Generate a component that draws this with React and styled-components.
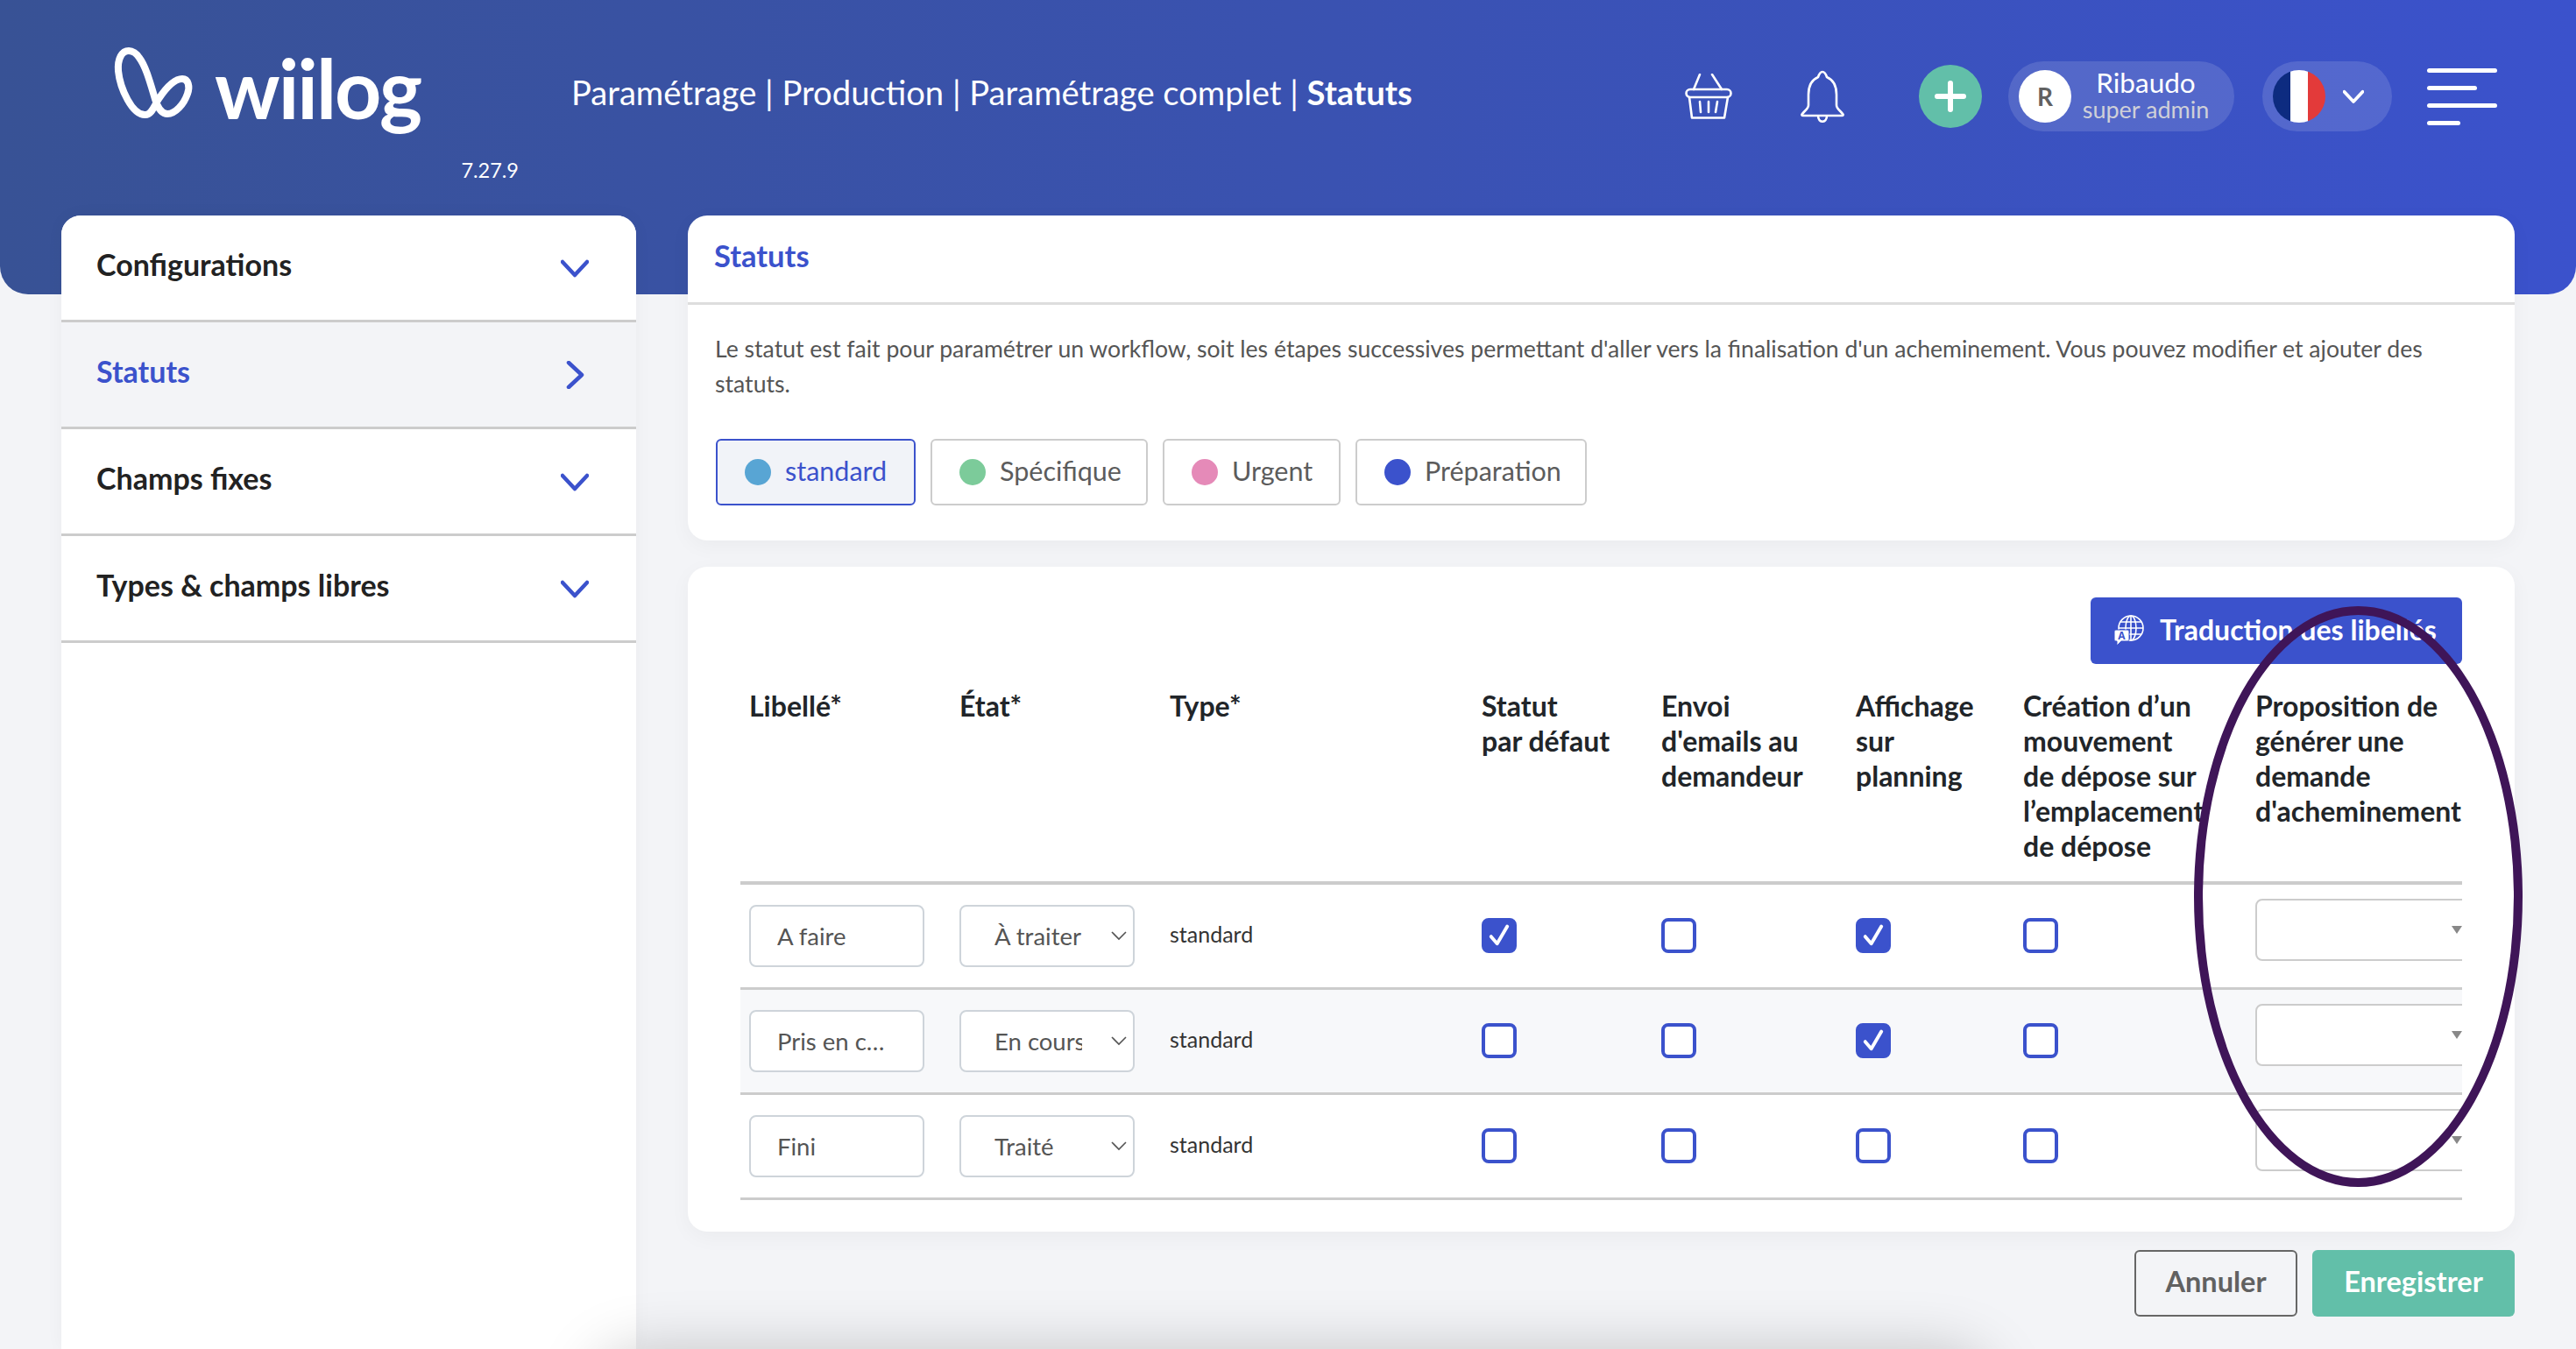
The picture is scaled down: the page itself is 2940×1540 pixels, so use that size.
import React from 'react';
import styled, { createGlobalStyle } from 'styled-components';

const BLUE = '#3b52cc';
const GREEN = '#62bfa9';
const FONT = 'Lato, "Open Sans", sans-serif';

const GlobalStyle = createGlobalStyle`
    html, body {
        margin: 0;
        padding: 0;
        background: #f3f4f7;
    }
    * {
        box-sizing: border-box;
    }
    body {
        font-family: ${FONT};
    }
`;

const Page = styled.div`
    position: relative;
    width: 2940px;
    height: 1540px;
    overflow: hidden;
    background: #f3f4f7;
`;

const Header = styled.header`
    display: flex;
    align-items: flex-start;
    height: 336px;
    padding: 53px 90px 0 129px;
    background: linear-gradient(90deg, #385295 0%, #3a52b0 50%, ${BLUE} 100%);
    border-radius: 0 0 32px 32px;
    color: #fff;
`;

const LogoBlock = styled.div`
    display: flex;
    flex-direction: column;
    width: 463px;
`;

const LogoRow = styled.div`
    display: flex;
    align-items: flex-start;
    height: 102px;
`;

const LogoWord = styled.span`
    margin: -4px 0 0 24px;
    font-size: 93px;
    font-weight: 700;
    line-height: 102px;
    letter-spacing: -2px;
`;

const Version = styled.div`
    margin-top: 25px;
    text-align: right;
    font-size: 23.5px;
    line-height: 28px;
`;

const Breadcrumb = styled.div`
    margin: 30px 0 0 60px;
    font-size: 38.2px;
    line-height: 44px;
    white-space: nowrap;

    strong {
        font-weight: 700;
    }
`;

const HeaderRight = styled.div`
    display: flex;
    align-items: center;
    height: 80px;
    margin: 17px 0 0 auto;
`;

const IconSlot = styled.div`
    display: flex;
    margin-left: ${(p) => p.$gap}px;
`;

const PlusButton = styled.div`
    display: flex;
    align-items: center;
    justify-content: center;
    width: 72px;
    height: 72px;
    margin-left: 84px;
    border-radius: 50%;
    background: ${GREEN};
`;

const Pill = styled.div`
    display: flex;
    align-items: center;
    width: ${(p) => p.$width}px;
    height: 80px;
    margin-left: ${(p) => p.$gap}px;
    padding-left: 12px;
    border-radius: 40px;
    background: rgba(255, 255, 255, 0.13);
`;

const Avatar = styled.div`
    display: flex;
    align-items: center;
    justify-content: center;
    flex: none;
    width: 60px;
    height: 60px;
    border-radius: 50%;
    background: #fff;
    color: #616161;
    font-size: 28px;
    font-weight: 700;
`;

const UserText = styled.div`
    flex: 1;
    margin-top: -3px;
    padding-right: 16px;
    text-align: center;
    white-space: nowrap;
`;

const UserName = styled.div`
    font-size: 31.5px;
    line-height: 32px;
`;

const UserRole = styled.div`
    color: #cfd0d8;
    font-size: 27px;
    line-height: 30px;
`;

const Flag = styled.div`
    display: flex;
    flex: none;
    width: 60px;
    height: 60px;
    border-radius: 50%;
    overflow: hidden;
`;

const FlagStripe = styled.span`
    flex: 1;
    background: ${(p) => p.$color};
`;

const Burger = styled.div`
    display: flex;
    flex-direction: column;
    gap: 15px;
    width: 80px;
    margin-left: 40px;
`;

const BurgerLine = styled.span`
    display: block;
    width: ${(p) => p.$width}px;
    height: 5px;
    border-radius: 3px;
    background: #fff;
`;

const Content = styled.div`
    display: flex;
    align-items: flex-start;
    gap: 59px;
    margin-top: -90px;
    padding: 0 70px;
`;

const Sidebar = styled.nav`
    flex: none;
    width: 656px;
    height: 1294px;
    border-radius: 22px 22px 0 0;
    background: #fff;
    box-shadow: 0 0 20px rgba(0, 0, 0, 0.04);
    overflow: hidden;
`;

const SideItem = styled.div`
    display: flex;
    align-items: center;
    justify-content: space-between;
    height: 122px;
    padding: 0 54px 0 40px;
    border-bottom: 3px solid #ccc;
    background: ${(p) => (p.$active ? '#f3f4f7' : '#fff')};
    color: ${(p) => (p.$active ? BLUE : '#222')};
    font-size: 34px;
    font-weight: 700;
    line-height: 40px;

    span {
        margin-bottom: 8px;
    }
`;

const Main = styled.main`
    display: flex;
    flex-direction: column;
    flex: 1;
`;

const Card = styled.section`
    border-radius: 22px;
    background: #fff;
    box-shadow: 0 6px 24px rgba(0, 0, 0, 0.04);
`;

const CardTitle = styled.h2`
    height: 102px;
    margin: 0;
    padding: 24px 30px 0;
    border-bottom: 3px solid #ddd;
    color: ${BLUE};
    font-size: 34.5px;
    font-weight: 700;
    line-height: 44px;
`;

const Description = styled.p`
    margin: 0;
    padding: 30px 50px 0 31px;
    color: #555;
    font-size: 26.6px;
    line-height: 40px;
`;

const Tabs = styled.div`
    display: flex;
    gap: 17px;
    padding: 43px 32px 40px;
`;

const Tab = styled.div`
    display: flex;
    align-items: center;
    gap: 16px;
    width: ${(p) => p.$width}px;
    height: 76px;
    padding-left: 31px;
    border: 2px solid ${(p) => (p.$active ? BLUE : '#ccc')};
    border-radius: 6px;
    background: ${(p) => (p.$active ? '#f1f3f8' : '#fff')};
    color: ${(p) => (p.$active ? BLUE : '#5c5c5c')};
    font-size: 30.5px;
    white-space: nowrap;

    span:last-child {
        margin-bottom: 5px;
    }
`;

const Dot = styled.span`
    flex: none;
    width: 30px;
    height: 30px;
    border-radius: 50%;
    background: ${(p) => p.$color};
`;

const TableCard = styled(Card)`
    height: 759px;
    margin-top: 30px;
    padding: 35px 60px 0;
`;

const Toolbar = styled.div`
    display: flex;
    justify-content: flex-end;
`;

const TranslateButton = styled.div`
    display: flex;
    align-items: center;
    gap: 17px;
    width: 424px;
    height: 76px;
    padding-left: 26px;
    border-radius: 6px;
    background: ${BLUE};
    color: #fff;
    font-size: 32px;
    font-weight: 700;
    white-space: nowrap;

    span {
        margin-bottom: 4px;
    }
`;

const Table = styled.table`
    width: 1965px;
    table-layout: fixed;
    border-collapse: collapse;
`;

const Col = styled.col`
    width: ${(p) => p.$width}px;
`;

const Th = styled.th`
    height: 250px;
    padding: 28px 0 18px 10px;
    border-bottom: 4px solid #ccc;
    color: #212529;
    font-size: 32px;
    font-weight: 700;
    line-height: 40px;
    text-align: left;
    vertical-align: top;
    white-space: nowrap;
    overflow: ${(p) => (p.$clip ? 'hidden' : 'visible')};
`;

const Tr = styled.tr`
    background: ${(p) => (p.$shaded ? '#f7f8fa' : 'transparent')};
`;

const Td = styled.td`
    height: 120px;
    padding: ${(p) => (p.$top ? '16px 0 0 10px' : '0 0 0 10px')};
    border-bottom: 3px solid #ccc;
    vertical-align: ${(p) => (p.$top ? 'top' : 'middle')};
    overflow: hidden;
`;

const TypeText = styled.span`
    display: block;
    margin-bottom: 5px;
    color: #333;
    font-size: 25px;
`;

const TextInput = styled.input`
    display: block;
    width: 200px;
    height: 71px;
    padding: 0 30px;
    border: 2px solid #ced4da;
    border-radius: 8px;
    background: #fff;
    color: #555;
    font-family: ${FONT};
    font-size: 27.5px;
    text-overflow: ellipsis;
    outline: none;
`;

const SelectBox = styled.div`
    display: flex;
    align-items: center;
    width: 200px;
    height: 71px;
    padding-left: 38px;
    border: 2px solid #ced4da;
    border-radius: 8px;
    background: #fff;
    color: #555;
    font-size: 27.5px;
`;

const SelectText = styled.span`
    flex: none;
    width: 100px;
    overflow: hidden;
    white-space: nowrap;
`;

const SelectArrow = styled.svg`
    flex: none;
    margin-left: 33px;
`;

const Select2 = styled.div`
    display: flex;
    align-items: center;
    justify-content: flex-end;
    width: 300px;
    height: 71px;
    border: 2px solid #ccc;
    border-radius: 8px;
    background: #fff;
`;

const Select2Wrap = styled.div`
    width: 236px;
    overflow: hidden;
`;

const Select2Arrow = styled.span`
    margin-right: 62px;
    border-top: 9px solid #888;
    border-left: 6px solid transparent;
    border-right: 6px solid transparent;
`;

const CheckBox = styled.span`
    display: flex;
    align-items: center;
    justify-content: center;
    width: 40px;
    height: 40px;
    border: 4px solid ${BLUE};
    border-radius: 8px;
    background: ${(p) => (p.$checked ? BLUE : '#fff')};
`;

const Footer = styled.div`
    display: flex;
    justify-content: flex-end;
    gap: 17px;
    margin-top: 21px;
`;

const CancelButton = styled.div`
    display: flex;
    align-items: center;
    justify-content: center;
    width: 186px;
    height: 76px;
    padding-bottom: 5px;
    border: 2px solid #666;
    border-radius: 6px;
    color: #616161;
    font-size: 32.5px;
    font-weight: 700;
`;

const SaveButton = styled.div`
    display: flex;
    align-items: center;
    justify-content: center;
    width: 231px;
    height: 76px;
    padding-bottom: 5px;
    border-radius: 6px;
    background: ${GREEN};
    color: #fff;
    font-size: 32.5px;
    font-weight: 700;
`;

// the circled area drawn over the screenshot
const Highlight = styled.div`
    position: absolute;
    left: 2504px;
    top: 692px;
    width: 375px;
    height: 663px;
    border: 10px solid #3f1558;
    border-radius: 50%;
    pointer-events: none;
`;

// shadow of a bar sitting just below the visible area
const BottomShade = styled.div`
    position: absolute;
    left: 700px;
    top: 1565px;
    width: 1550px;
    height: 60px;
    border-radius: 30px;
    box-shadow: 0 0 70px 20px rgba(0, 0, 0, 0.22);
    pointer-events: none;
`;

const Chevron = ({ dir = 'down', color = BLUE, size = 32, stroke = 4.5 }) => (
    <svg width={size} height={size} viewBox="0 0 32 32" fill="none" stroke={color} strokeWidth={stroke} strokeLinecap="round" strokeLinejoin="round">
        <path d={dir === 'down' ? 'M2 9 L16 24 L30 9' : 'M9 2 L24 16 L9 30'} />
    </svg>
);

const LogoMark = () => (
    <svg width="92" height="84" viewBox="128 52 92 84" fill="none" stroke="#fff" strokeWidth="8">
        <path d="M146 57 C138 57 133 66 134 80 C136 100 150 131 165 130 C172 130 175 120 180 112 C188 100 198 89 207 89 C214 89 216 98 213 106 C209 118 199 129 190 129 C183 129 179 122 176 112 C170 92 165 74 158 65 C155 60 150 57 146 57Z" />
    </svg>
);

const BasketIcon = () => (
    <svg width="54" height="52" viewBox="0 0 54 52" fill="none" stroke="#fff" strokeWidth="2.6" strokeLinejoin="round" strokeLinecap="round">
        <path d="M17 1 L10 18 M31 1 L42 18" />
        <rect x="1.5" y="18" width="51" height="9" rx="4.5" />
        <path d="M5 27 L8 50.5 H45 L49 27" />
        <path d="M17 32 L18 44 M27 32 V44 M37 32 L35 44" />
    </svg>
);

const BellIcon = () => (
    <svg width="52" height="60" viewBox="0 0 52 60" fill="none" stroke="#fff" strokeWidth="2.6" strokeLinejoin="round">
        <path d="M26 2 C29 2 30 5 31 8 C38 11 42 18 42 28 V40 C42 44 46 46 49 50 C50 51 50 52 48 52 H4 C2 52 2 51 3 50 C6 46 10 44 10 40 V28 C10 18 14 11 21 8 C22 5 23 2 26 2Z" />
        <path d="M21 52 C21 61 31 61 31 52" />
    </svg>
);

const PlusIcon = () => (
    <svg width="36" height="36" viewBox="0 0 36 36" stroke="#fff" strokeWidth="6" strokeLinecap="round">
        <path d="M18 3 V33 M3 18 H33" />
    </svg>
);

const GlobeIcon = () => (
    <svg width="36" height="36" viewBox="0 0 36 36" fill="none" stroke="#fff" strokeWidth="1.6">
        <circle cx="20" cy="15" r="14" />
        <ellipse cx="20" cy="15" rx="6" ry="14" />
        <path d="M20 1 V29 M6 15 H34 M8 8 H32 M8 22 H32" />
        <path d="M3 17 H16 C17 17 18 18 18 19 V28 C18 29 17 30 16 30 H9 L4 35 V30 H3 C2 30 1 29 1 28 V19 C1 18 2 17 3 17Z" fill="#fff" stroke={BLUE} strokeWidth="1" />
        <text x="9.5" y="28" fontFamily="Open Sans, sans-serif" fontSize="12" fontWeight="700" fill={BLUE} stroke="none" textAnchor="middle">A</text>
    </svg>
);

const CheckMark = () => (
    <svg width="30" height="30" viewBox="0 0 26 26" fill="none" stroke="#fff" strokeWidth="3.4" strokeLinecap="round" strokeLinejoin="round">
        <path d="M5 14 L11 21 L21 4" />
    </svg>
);

const sideItems = [
    { label: 'Configurations' },
    { label: 'Statuts', active: true },
    { label: 'Champs fixes' },
    { label: 'Types & champs libres' },
];

const tabs = [
    { label: 'standard', color: '#58a5d4', width: 228, active: true },
    { label: 'Spécifique', color: '#7ccb9a', width: 248 },
    { label: 'Urgent', color: '#e58ab8', width: 203 },
    { label: 'Préparation', color: BLUE, width: 264 },
];

const columns = [
    { width: 240, lines: ['Libellé*'] },
    { width: 240, lines: ['État*'] },
    { width: 356, lines: ['Type*'] },
    { width: 205, lines: ['Statut', 'par défaut'] },
    { width: 222, lines: ['Envoi', "d'emails au", 'demandeur'] },
    { width: 191, lines: ['Affichage', 'sur', 'planning'] },
    { width: 265, lines: ['Création d’un', 'mouvement', 'de dépose sur', 'l’emplacement', 'de dépose'] },
    { width: 246, lines: ['Proposition de', 'générer une', 'demande', "d'acheminement"], clip: true },
];

const rows = [
    { label: 'A faire', state: 'À traiter', checks: [true, false, true, false] },
    { label: 'Pris en charge', state: 'En cours', checks: [false, false, true, false], shaded: true },
    { label: 'Fini', state: 'Traité', checks: [false, false, false, false] },
];

const App = () => (
    <Page>
        <GlobalStyle />
        <Header>
            <LogoBlock>
                <LogoRow>
                    <LogoMark />
                    <LogoWord>wiilog</LogoWord>
                </LogoRow>
                <Version>7.27.9</Version>
            </LogoBlock>
            <Breadcrumb>
                Paramétrage | Production | Paramétrage complet | <strong>Statuts</strong>
            </Breadcrumb>
            <HeaderRight>
                <IconSlot $gap={0}><BasketIcon /></IconSlot>
                <IconSlot $gap={77}><BellIcon /></IconSlot>
                <PlusButton><PlusIcon /></PlusButton>
                <Pill $width={258} $gap={30}>
                    <Avatar>R</Avatar>
                    <UserText>
                        <UserName>Ribaudo</UserName>
                        <UserRole>super admin</UserRole>
                    </UserText>
                </Pill>
                <Pill $width={148} $gap={32}>
                    <Flag>
                        <FlagStripe $color="#0d2b80" />
                        <FlagStripe $color="#fff" />
                        <FlagStripe $color="#e33a3a" />
                    </Flag>
                    <IconSlot $gap={20}><Chevron color="#fff" size={24} stroke={5} /></IconSlot>
                </Pill>
                <Burger>
                    <BurgerLine $width={80} />
                    <BurgerLine $width={57} />
                    <BurgerLine $width={80} />
                    <BurgerLine $width={38} />
                </Burger>
            </HeaderRight>
        </Header>
        <Content>
            <Sidebar>
                {sideItems.map((item) => (
                    <SideItem key={item.label} $active={item.active}>
                        <span>{item.label}</span>
                        <Chevron dir={item.active ? 'right' : 'down'} />
                    </SideItem>
                ))}
            </Sidebar>
            <Main>
                <Card>
                    <CardTitle>Statuts</CardTitle>
                    <Description>
                        Le statut est fait pour paramétrer un workflow, soit les étapes successives permettant d'aller vers la finalisation d'un acheminement. Vous pouvez modifier et ajouter des statuts.
                    </Description>
                    <Tabs>
                        {tabs.map((tab) => (
                            <Tab key={tab.label} $active={tab.active} $width={tab.width}>
                                <Dot $color={tab.color} />
                                <span>{tab.label}</span>
                            </Tab>
                        ))}
                    </Tabs>
                </Card>
                <TableCard>
                    <Toolbar>
                        <TranslateButton>
                            <GlobeIcon />
                            <span>Traduction des libellés</span>
                        </TranslateButton>
                    </Toolbar>
                    <Table>
                        <colgroup>
                            {columns.map((col) => (
                                <Col key={col.lines[0]} $width={col.width} />
                            ))}
                        </colgroup>
                        <thead>
                            <tr>
                                {columns.map((col) => (
                                    <Th key={col.lines[0]} $clip={col.clip}>
                                        {col.lines.map((line) => (
                                            <div key={line}>{line}</div>
                                        ))}
                                    </Th>
                                ))}
                            </tr>
                        </thead>
                        <tbody>
                            {rows.map((row) => (
                                <Tr key={row.label} $shaded={row.shaded}>
                                    <Td><TextInput readOnly value={row.label} /></Td>
                                    <Td>
                                        <SelectBox>
                                            <SelectText>{row.state}</SelectText>
                                            <SelectArrow width="18" height="12" viewBox="0 0 18 12" fill="none" stroke="#555" strokeWidth="1.6">
                                                <path d="M1 2 L9 10 L17 2" />
                                            </SelectArrow>
                                        </SelectBox>
                                    </Td>
                                    <Td><TypeText>standard</TypeText></Td>
                                    {row.checks.map((checked, i) => (
                                        <Td key={i}>
                                            <CheckBox $checked={checked}>{checked && <CheckMark />}</CheckBox>
                                        </Td>
                                    ))}
                                    <Td $top>
                                        <Select2Wrap>
                                            <Select2><Select2Arrow /></Select2>
                                        </Select2Wrap>
                                    </Td>
                                </Tr>
                            ))}
                        </tbody>
                    </Table>
                </TableCard>
                <Footer>
                    <CancelButton>Annuler</CancelButton>
                    <SaveButton>Enregistrer</SaveButton>
                </Footer>
            </Main>
        </Content>
        <Highlight />
        <BottomShade />
    </Page>
);

export default App;
